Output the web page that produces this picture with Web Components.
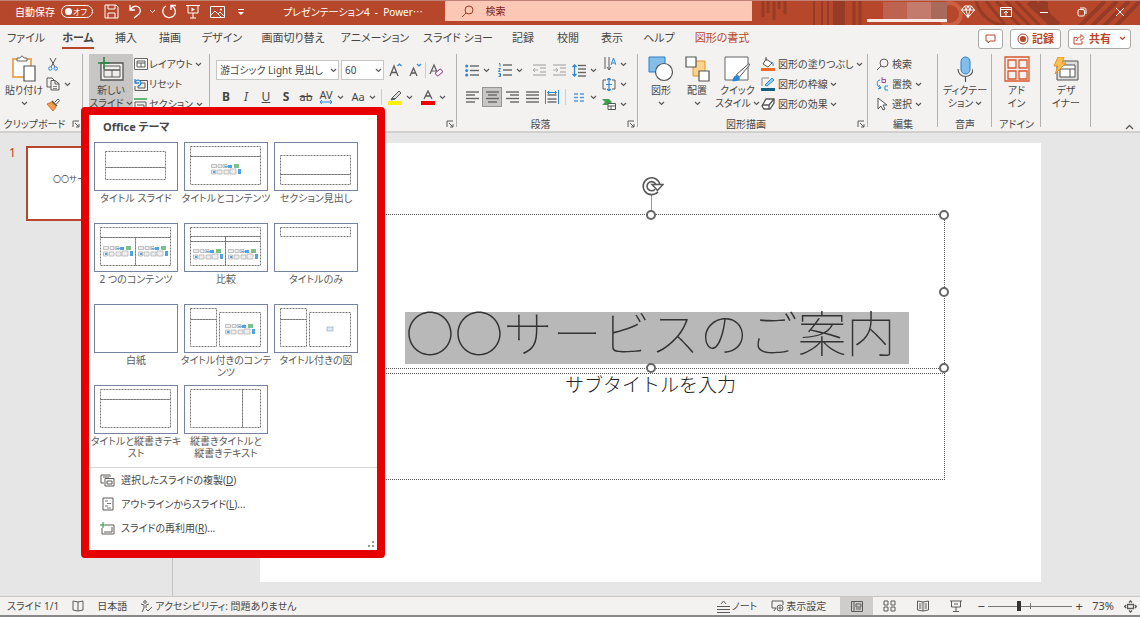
<!DOCTYPE html>
<html lang="ja">
<head>
<meta charset="utf-8">
<meta name="viewport" content="width=device-width, initial-scale=1">
<title>プレゼンテーション4 - PowerPoint</title>
<style>
  body {
    margin: 0;
    color: #484644;
    font: 11px/14px "Noto Sans", "Noto Sans CJK JP", sans-serif;
    font-feature-settings: "palt" 1;
  }
</style>
</head>
<body>
<app-window></app-window>
<script>
/* ---------- icon set: [width, height, markup] ---------- */
const G = 'fill="none" stroke="#5d5b59"';
const B = 'fill="none" stroke="#2b88d8"';
const rows = (list, color = '#666') => list.map(([x, y, w]) => `<path d="M${x} ${y}h${w}" stroke="${color}" stroke-width="1.4"/>`).join('');
const ICONS = {
  caret: [7, 5, `<path d="M1 1l2.5 2.5L6 1" ${G} stroke-width="1.2"/>`],
  caretWhite: [7, 5, '<path d="M1 1l2.5 2.5L6 1" fill="none" stroke="#fff"/>'],
  caretRed: [7, 5, '<path d="M1 1l2.5 2.5L6 1" fill="none" stroke="#b7472a" stroke-width="1.2"/>'],
  save: [15, 15, '<path d="M1 1h11l2 2v11H1zM4 1v4h7V1M4 14V9h7v5" fill="none" stroke="#fff"/>'],
  undo: [14, 15, '<path d="M2 1v5h5M2 6C4 3 7 1.500 9.500 2.500C13 4 13 8 11 10L6 14" fill="none" stroke="#fff" stroke-width="1.300"/>'],
  redo: [16, 15, '<path d="M5 2C2 3.500 1 7 2.500 10C4 13.500 9 15 12.500 12C15.500 9 15 4.500 11 2M10 6V1.500h5" fill="none" stroke="#fff" stroke-width="1.300"/>'],
  present: [14, 15, '<path d="M0 1.500h14M2 2v7h10V2M7 9v5M4 14h6" fill="none" stroke="#fff"/><path d="M5.500 3.500v4L9 5.500z" fill="#fff"/>'],
  picture: [15, 12, '<path d="M.5.5h14v11H.5zM1 9l4-4 6 6M8 8l2-2 4 4" fill="none" stroke="#fff"/><circle cx="11" cy="3.500" r="1" fill="#fff"/>'],
  more: [8, 8, '<path d="M1 1.500h6" stroke="#fff"/><path d="M1 4l3 3 3-3z" fill="#fff"/>'],
  searchRed: [13, 13, '<circle cx="8" cy="5" r="4" fill="none" stroke="#9c3a28"/><path d="M5 8L1 12" stroke="#9c3a28"/>'],
  diamond: [14, 13, '<path d="M3.500 1h7L13.500 5 7 12.500.5 5zM.5 5h13M3.500 1L5 5l2 7.500L9 5l1.500-4M5 5l2-4 2 4" fill="none" stroke="#fff"/>'],
  display: [12, 10, '<path d="M.5.500h11v9H.5zM.5 2.500h11M6 8.500V4M4 6l2-2 2 2" fill="none" stroke="#fff"/>'],
  minimize: [10, 10, '<path d="M1 5.500h8" stroke="#fff"/>'],
  restore: [10, 10, '<rect x="1" y="2.500" width="6.500" height="6.500" rx="1.500" fill="none" stroke="#fff"/><path d="M3 1h4.500Q9 1 9 2.500V7" fill="none" stroke="#fff"/>'],
  close: [10, 10, '<path d="M1 1l8 8M9 1L1 9" stroke="#fff"/>'],
  comment: [11, 10, '<path d="M1 1h9v6H5L3 9V7H1z" fill="none" stroke="#b7472a"/>'],
  record: [12, 12, '<circle cx="6" cy="6" r="5" fill="none" stroke="#b7472a"/><circle cx="6" cy="6" r="3" fill="#b7472a"/>'],
  share: [12, 12, '<path d="M4 4.500H1v6.500h8V8M3.500 8C4 5 6 4 8 4V1.500L11 4.500 8 7.500V5.500" fill="none" stroke="#b7472a"/>'],
  paste: [24, 28, `<path d="M1 4h18v18H1z" fill="#fff" stroke="#e8912d" stroke-width="1.500"/><path d="M5 6V3h3Q10-1 12 3h3v3z" fill="#fff" stroke="#666"/><path d="M12 11h11v15H12z" fill="#fff" stroke="#555" stroke-width="1.200"/>`],
  cut: [10, 13, '<path d="M2 0l5 9M8 0L3 9" stroke="#555" fill="none"/><circle cx="2.300" cy="10.500" r="1.700" fill="none" stroke="#2b88d8"/><circle cx="7.700" cy="10.500" r="1.700" fill="none" stroke="#2b88d8"/>'],
  copy: [14, 14, `<path d="M5 10H1V1h5l2 2M5 3.500h4l4 3V13H5zM9 4v3h4" ${G}/><path d="M7 9.500h4M7 11.500h4" stroke="#888"/>`],
  brush: [14, 13, '<path d="M9 4l3-3 1.500 1.500-3 3.500" fill="#fff" stroke="#555"/><path d="M1 6l5-2 4 5-3 4z" fill="#f4a044" stroke="#d9722b"/><path d="M6 3l5 5" stroke="#555" stroke-width="1.500"/>'],
  newSlide: [26, 25, `<path d="M3 6h22v17H3z" fill="#eee" stroke="#555" stroke-width="1.300"/><path d="M6 9h16v4H6zM6 13h16v7H6zM14 13v7" ${G}/><path d="M0 6h12M6 0v12" stroke="#2a8a3a" stroke-width="1.600"/>`],
  layout: [14, 12, `<path d="M.5.500h13v11H.5z" fill="#fff" stroke="#666"/><path d="M3 3h8v6H3zM3 5h8M7 5v4" ${G}/>`],
  reset: [14, 13, `<path d="M5 2.500h8.500v10H1V8M7 5h4v5H4V8" ${G}/><path d="M1 1v4h4M1 5C2 2 5 1 6.500 3.500C7.500 6 6 8 4 8" ${B} stroke-width="1.300"/>`],
  section: [14, 14, `<path d="M0 1h13v2H0z" fill="#6bb57a"/><path d="M1 5h11v8H1zM3 8h7v5" ${G}/>`],
  grow: [13, 14, `<path d="M1 13L5 3l4 10M2.500 9.500h5" ${G} stroke-width="1.300"/><path d="M8.500 3L10.500 1l2 2" ${B} stroke-width="1.200"/>`],
  shrink: [13, 14, `<path d="M1 13L4.500 5l3.500 8M2.300 10h4.400" ${G} stroke-width="1.300"/><path d="M8 1l2 2 2-2" ${B} stroke-width="1.200"/>`],
  clear: [14, 14, `<path d="M1 11L5 2l4 9M2.500 8h5" ${G} stroke-width="1.200"/><rect x="6.500" y="7.500" width="7" height="4" rx="1" transform="rotate(-40 10 9.500)" fill="#fff" stroke="#a349a4"/>`],
  spacing: [14, 4, `<path d="M1 2h12M3 0L1 2l2 2M11 0l2 2-2 2" ${B}/>`],
  marker: [14, 15, '<path d="M4 8l7-7 2 2-6 6zM4 8l3 1-4 1z" fill="#ddd" stroke="#555"/><path d="M0 11h14v4H0z" fill="#fff100"/>'],
  fontColor: [14, 15, `<path d="M3 9l4-8 4 8M4.500 6h5" ${G} stroke-width="1.300"/><path d="M0 11h14v4H0z" fill="#f00000"/>`],
  bullets: [14, 13, rows([[5, 2, 9], [5, 6.5, 9], [5, 11, 9]]) + '<g fill="#2b88d8"><circle cx="1.700" cy="2" r="1.500"/><circle cx="1.700" cy="6.500" r="1.500"/><circle cx="1.700" cy="11" r="1.500"/></g>'],
  numbers: [14, 14, rows([[5, 2, 9], [5, 7, 9], [5, 12, 9]]) + `<path d="M1 .5h1v3M.5 5.500h2L.5 8.500h2M.5 10.500h2v3h-2M1 12h1.500" ${B}/>`],
  outdent: [13, 12, rows([[0, 1, 13], [7, 4, 6], [7, 8, 6], [0, 11, 13]], '#b5b5b5') + '<path d="M0 6h5M2 4L0 6l2 2" fill="none" stroke="#aaa"/>'],
  indent: [13, 12, rows([[0, 1, 13], [7, 4, 6], [7, 8, 6], [0, 11, 13]], '#b5b5b5') + '<path d="M0 6h5M3 4l2 2-2 2" fill="none" stroke="#aaa"/>'],
  lineSpace: [14, 13, rows([[6, 1.5, 8], [6, 5, 8], [6, 8.5, 8], [6, 12, 8]]) + `<path d="M2.500 1v11M.5 3l2-2 2 2M.5 10l2 2 2-2" ${B} stroke-width="1.300"/>`],
  alignL: [13, 12, rows([[0, 1, 13], [0, 4, 9], [0, 7.5, 13], [0, 11, 9]])],
  alignC: [13, 12, rows([[0, 1, 13], [2, 4, 9], [0, 7.5, 13], [2, 11, 9]])],
  alignR: [13, 12, rows([[0, 1, 13], [4, 4, 9], [0, 7.5, 13], [4, 11, 9]])],
  justify: [13, 12, rows([[0, 1, 13], [0, 4, 13], [0, 7.5, 13], [0, 11, 13]])],
  distribute: [14, 14, rows([[2.5, 5, 9], [2.5, 9, 9], [2.5, 12, 9]]) + `<path d="M.5 0v14M13.500 0v14M2 2.500h10M4 1L2.500 2.500 4 4M10 1l1.500 1.500L10 4" ${B}/>`],
  columns: [11, 9, rows([[0, 1, 4], [6, 1, 4], [0, 4.5, 4], [6, 4.5, 4], [0, 8, 4], [6, 8, 4]], '#4a97d6')],
  direction: [13, 14, `<path d="M2 0v12M6 0v12M4 10l2 3 2-3" ${G}/><path d="M8 8l2.500-7L13 8M9 6h3" ${B}/>`],
  alignText: [14, 13, `<path d="M4 2H1v9h3M10 2h3v9h-3" ${G}/><path d="M7 0v13M5 2l2-2 2 2M5 11l2 2 2-2M4 6.500h6" ${B} stroke-width="1.200"/>`],
  smartArt: [14, 12, '<path d="M0 1h7l3 3-3 3H0l3-3z" fill="#3fa04d"/><path d="M6 5.500h7.500v6H6z" fill="#fff" stroke="#555"/><path d="M6 8h7M9 8v3" stroke="#555"/>'],
  shapes: [26, 26, '<path d="M1 1h16v15H1z" fill="#83bdec" stroke="#2b7fc7"/><circle cx="16" cy="16" r="8.500" fill="#fff" stroke="#555" stroke-width="1.200"/>'],
  arrange: [25, 26, '<path d="M8 5h12v15H8z" fill="#fbd38a" stroke="#e8912d"/><path d="M1 1h10v10H1zM14 15h10v10H14z" fill="#fff" stroke="#555" stroke-width="1.200"/>'],
  quick: [26, 27, '<path d="M1 1h23v23H1z" fill="#fff" stroke="#666"/><path d="M25 7.500L25.500 9 15.500 21l-3-2.500z" fill="#fff" stroke="#555"/><path d="M8 25q2-6 5-6l3 3q-1 4-8 3z" fill="#2b88d8"/>'],
  fill: [14, 14, '<path d="M5 2l6 4-4 4-5-3zM5 4V0" fill="#fff" stroke="#555"/><path d="M11 5q2 2 1 4" fill="none" stroke="#2b88d8"/><path d="M0 11h14v3H0z" fill="#ed6b2d"/>'],
  outline: [14, 14, '<path d="M1 9V1h7" fill="none" stroke="#888"/><path d="M4 8l7-7 2 2-7 6z" fill="#9dd0f5" stroke="#2b88d8"/><path d="M0 11h14v3H0z" fill="#156082"/>'],
  effects: [14, 12, '<path d="M5 1h8v4l-4 6H3L1 8z" fill="#fff" stroke="#555" stroke-width="1.300"/><path d="M1 7h7l5-6M8 7v4" fill="none" stroke="#555" stroke-width="1.300"/>'],
  find: [13, 13, `<circle cx="8" cy="5" r="4" ${G}/><path d="M5 8L1 12" ${G}/>`],
  replace: [13, 14, '<path d="M6 0v5.500h3.500V2.500H6" fill="none" stroke="#a349a4"/><path d="M4 3C1 3 0 8 3 10l2 1M3 8l2 3-3 1M12 9H9v4h3" fill="none" stroke="#2b88d8"/>'],
  select: [10, 14, `<path d="M1 1v11l3-3 2 4 2-1-2-4h4z" fill="#fff" stroke="#555"/>`],
  mic: [16, 26, '<rect x="4" y="1" width="9" height="17" rx="4.500" fill="#83bdec" stroke="#2b7fc7"/><path d="M1 13c0 10 15 10 15 0M8.500 21v5" fill="none" stroke="#555" stroke-width="1.200"/>'],
  addins: [26, 26, '<path d="M1 1h24v24H1zM4 4h8v8H4zM15 4h8v8h-8zM4 15h8v8H4zM15 15h8v8h-8z" fill="none" stroke="#d9572b" stroke-width="1.300"/>'],
  designer: [26, 25, '<path d="M4 4h21v19H4z" fill="#ddd" stroke="#555"/><path d="M7 8h15v12H7zM7 12h15M17 12v8" fill="#fff" stroke="#555"/><path d="M5 0h6L9 6h4L2 17l3-8H1z" fill="#fbc04d" stroke="#e8912d"/>'],
  launcher: [8, 8, `<path d="M1 7V1h6M3 3l4 4M7 4v3H4" ${G}/>`],
  collapse: [9, 6, `<path d="M1 5l3.500-3.500L8 5" ${G} stroke-width="1.300"/>`],
  duplicate: [15, 13, `<path d="M4 9H1V1h9v2M3 3H9" ${G}/><path d="M5 4.500h9v7.500H5zM7 7h5v3H7z" fill="#fff" stroke="#5d5b59"/>`],
  outlineDoc: [12, 14, `<path d="M1 1h10v12H1z" ${G}/><path d="M3 4h3M5 6.500h4M3 9h3M5 11h4" stroke="#777"/>`],
  reuse: [15, 13, `<path d="M6 3h8v9H2V6M4 10h8V5" ${G}/><path d="M0 3h6M3 0v6" stroke="#2a8a3a"/>`],
  rotate: [22, 20, '<path d="M14.500 14.500A6.500 6.500 0 1 1 16 9" fill="none" stroke="#5a5a5a" stroke-width="5.500"/><path d="M14.500 14.500A6.500 6.500 0 1 1 16 9" fill="none" stroke="#fff" stroke-width="2.200"/><path d="M10 8.500h11l-5.500 6z" fill="#fff" stroke="#5a5a5a" stroke-width="1.500"/>'],
  book: [12, 12, `<path d="M6 2L1 1v9l5 1 5-1V1zM6 2v9" ${G}/>`],
  access: [12, 12, `<circle cx="5" cy="2" r="1.300" ${G}/><path d="M1 4l3 1v3l-2 4M9 4L6 5v3M6 9l2 2 4-4" ${G}/>`],
  notes: [13, 13, `<path d="M0 6.500h13M0 9.500h13M0 12.500h13M4 4l2.500-3L9 4" ${G}/>`],
  viewOpt: [13, 12, `<path d="M5 8H1V1h11v4M3 11l2-3" ${G}/><circle cx="9" cy="8" r="3" ${G}/><circle cx="9" cy="8" r="1" ${G}/>`],
  normal: [12, 11, `<path d="M.5.500h11v10H.5zM3 1v9M5 3h5v3H5zM5 8h5" ${G}/>`],
  sorter: [13, 12, `<path d="M1 1h4v4H1zM8 1h4v4H8zM1 7h4v4H1zM8 7h4v4H8z" ${G}/>`],
  reading: [12, 12, `<path d="M6 2L.5 1v9L6 11l5.500-1V1zM6 2v9M2 4h2.500M2 6h2.500M2 8h2.500M7.500 4H10M7.500 6H10M7.500 8H10" ${G}/>`],
  show: [12, 12, `<path d="M0 1h12M1.500 1v6h9V1M6 7v4M3 11.500h6M4 4h4" ${G}/>`],
  fit: [13, 13, `<path d="M3.500 4.500h6v4h-6zM5 2.500L6.500 1 8 2.500M5 10.500L6.500 12 8 10.500M2 5L.7 6.500 2 8M11 5l1.300 1.500L11 8" ${G} stroke-width="1.300"/>`]
};
const icon = name => {
  const [w, h, art] = ICONS[name];
  return `<svg width="${w}" height="${h}" viewBox="0 0 ${w} ${h}" aria-hidden="true">${art}</svg>`;
};

const BASE = `
  :host { box-sizing: border-box; display: block; }
  *, *::before, *::after { box-sizing: border-box; }
  button, select, input { margin: 0; padding: 0; border: 0; background: none; color: inherit; font: inherit; font-feature-settings: inherit; white-space: nowrap; }
  svg { display: block; flex: none; }
`;
const define = (name, render) => customElements.define(name, class extends HTMLElement {
  constructor() {
    super();
    this.attachShadow({ mode: 'open' });
  }
  connectedCallback() {
    this.shadowRoot.innerHTML = render(this);
  }
});

/* ---------- title bar ---------- */
define('title-bar', () => `
<style>${BASE}
  :host { position: relative; display: grid; grid-template-columns: 39fr 27fr 34fr; height: 25px; overflow: hidden; background: #b7472a; border-top: 1px solid #c08377; color: #fff; }
  .art { position: absolute; right: 0; top: 0; }
  .left, .right { display: flex; align-items: center; height: 21px; min-width: 0; position: relative; }
  .left { padding-left: 15px; }
  .right { justify-content: flex-end; padding-right: 1px; }
  label { display: flex; align-items: center; gap: 6px; margin-right: 6px; font-size: 10px; }
  .switch { position: relative; width: 32px; height: 13px; font-size: 8px; line-height: 11px; border: 1px solid #fff; border-radius: 7px; text-align: right; padding-right: 5px; }
  .switch input { position: absolute; inset: 0; appearance: none; }
  .switch input::before { content: ""; position: absolute; left: 3px; top: 2px; width: 7px; height: 7px; border-radius: 50%; background: #fff; }
  .left button { display: grid; place-items: center; width: 24px; height: 20px; flex: none; }
  .left button.drop { width: 10px; }
  h1 { margin: 0 0 0 30px; font-size: 10px; font-weight: 400; white-space: pre; }
  h1 span { font-family: "Noto Sans CJK JP", sans-serif; font-feature-settings: normal; }
  .search { display: flex; align-items: center; height: 20px; padding-left: 16px; gap: 12px; background: #fcc7b4; color: #7c2214; position: relative; }
  .search input { flex: 1; min-width: 0; font-size: 10px; outline: 0; }
  .search input::placeholder { color: #7c2214; opacity: 1; }
  .right button { display: grid; place-items: center; width: 38px; height: 20px; }
  .account { display: grid; grid-template-columns: 16px 24px 24px 16px; width: 80px; height: 20px; margin-right: 2px; border-bottom: 3px solid #fbe9e5; align-self: end; }
  .account i:nth-child(1) { background: #b7472a; }
  .account i:nth-child(2) { background: #bd6350; }
  .account i:nth-child(3) { background: #c27b6c; }
  .account i:nth-child(4) { background: #a96a5c; }
</style>
<svg class="art" width="380" height="25" viewBox="0 0 380 25" fill="none" stroke="#963b25">
  <path d="M3 0v16M8 0v12M14 0v19M19 0v8M25 0v13" stroke-width="3"/>
  <path d="M54 0v25M62 0v25M68 0v25" stroke-width="2"/><path d="M79 0v25" stroke-width="12"/>
  <path d="M94 0v25M100 0v25" stroke-width="3"/>
  <circle cx="190" cy="13" r="11" stroke="#cb6043" stroke-width="4"/>
  <path d="M216 0q8 25 36 25M226 0l20 25M236 0l24 25M246 0l24 25M256 0l24 25" stroke-width="3"/>
  <path d="M270 0l26 25M284 0q-4 14 14 25" stroke-width="9"/>
  <path d="M320 25l25-25M332 25l25-25M344 25l25-25M356 25l24-25" stroke-width="4"/>
</svg>
<div class="left">
  <label>自動保存<span class="switch"><input type="checkbox" role="switch" aria-label="自動保存">オフ</span></label>
  <button aria-label="保存">${icon('save')}</button>
  <button aria-label="元に戻す">${icon('undo')}</button>
  <button class="drop" aria-label="元に戻す履歴">${icon('caretWhite')}</button>
  <button aria-label="やり直し">${icon('redo')}</button>
  <button aria-label="先頭から開始">${icon('present')}</button>
  <button aria-label="画像">${icon('picture')}</button>
  <button aria-label="カスタマイズ">${icon('more')}</button>
  <h1>プレゼンテーション4  -  Power<span>…</span></h1>
</div>
<div class="search">${icon('searchRed')}<input type="search" placeholder="検索" aria-label="検索"></div>
<div class="right">
  <span class="account"><i></i><i></i><i></i><i></i></span>
  <button aria-label="プレミアム">${icon('diamond')}</button>
  <button aria-label="リボンの表示">${icon('display')}</button>
  <button aria-label="最小化">${icon('minimize')}</button>
  <button aria-label="元のサイズ">${icon('restore')}</button>
  <button aria-label="閉じる">${icon('close')}</button>
</div>`);

/* ---------- tabs ---------- */
define('tab-strip', () => `
<style>${BASE}
  :host { display: flex; justify-content: space-between; height: 27px; background: #f3f2f1; }
  nav { display: grid; grid-template-columns: 52px 52px 44px 44px 60px 82px 82px 84px 46px 44px 44px 50px 76px; }
  a { display: flex; justify-content: center; align-items: center; color: inherit; text-decoration: none; white-space: nowrap; }
  a span { padding: 3px 0 2px; border-bottom: 2px solid transparent; }
  a.on { font-weight: 700; }
  a.on span { border-color: #b7472a; }
  a.context { color: #b7472a; }
  .actions { display: flex; align-items: center; gap: 7px; padding-right: 9px; color: #b7472a; font-weight: 700; }
  button { display: flex; align-items: center; justify-content: center; gap: 3px; height: 20px; padding: 0 6px; background: #fff; border: 1px solid #aaa8a6; border-radius: 3px; }
  .share { gap: 4px; padding: 0 4px; }
  .share svg:last-child { margin-left: 4px; }
</style>
<nav>
  <a href="#"><span>ファイル</span></a><a href="#" class="on"><span>ホーム</span></a><a href="#"><span>挿入</span></a><a href="#"><span>描画</span></a>
  <a href="#"><span>デザイン</span></a><a href="#"><span>画面切り替え</span></a><a href="#"><span>アニメーション</span></a><a href="#"><span>スライド ショー</span></a>
  <a href="#"><span>記録</span></a><a href="#"><span>校閲</span></a><a href="#"><span>表示</span></a><a href="#"><span>ヘルプ</span></a><a href="#" class="context"><span>図形の書式</span></a>
</nav>
<div class="actions">
  <button aria-label="コメント">${icon('comment')}</button>
  <button>${icon('record')}記録</button>
  <button class="share">${icon('share')}共有${icon('caretRed')}</button>
</div>`);

/* ---------- ribbon parts ---------- */
define('ribbon-group', el => `
<style>${BASE}
  :host { display: grid; grid-template-rows: 1fr 14px; padding-top: 2px; min-width: 0; position: relative; }
  :host::after { content: ""; position: absolute; right: 0; top: 2px; bottom: 4px; width: 1px; background: #b3b1af; }
  .body { display: flex; min-width: 0; min-height: 0; }
  footer { display: flex; justify-content: center; font-size: 10px; white-space: nowrap; padding: 0 14px 0 0; }
  :host([plain]) .body { justify-content: center; }
  :host([plain]) footer { padding: 0; }
  button { position: absolute; right: 3px; bottom: 3px; }
</style>
<div class="body"><slot></slot></div>
<footer>${el.getAttribute('label') || ''}</footer>
${el.hasAttribute('plain') ? '' : `<button aria-label="詳細設定">${icon('launcher')}</button>`}`);

define('tool-button', el => `
<style>${BASE}
  :host { flex: none; }
  button { display: flex; align-items: center; height: 20px; }
  .art { display: grid; place-items: center; width: 20px; height: 20px; flex: none; }
  .drop { display: grid; place-items: center; width: 12px; margin-left: -2px; }
  :host([wide]) .drop { margin-left: 0; }
  :host([tight]) .art { width: 16px; }
  :host([pressed]) button { background: #c8c6c4; outline: 1px solid #979593; outline-offset: -1px; }
</style>
<button aria-label="${el.getAttribute('name')}">
  <span class="art">${el.getAttribute('icon') ? icon(el.getAttribute('icon')) : '<slot name="face"></slot>'}</span><slot></slot>
  ${el.hasAttribute('drop') ? `<span class="drop">${icon('caret')}</span>` : ''}
</button>`);

define('tall-button', el => `
<style>${BASE}
  :host { flex: none; }
  button { display: grid; grid-template-rows: 30px 13px 13px; justify-items: center; align-items: center; width: 100%; line-height: 13px; font-size: 10px; }
  .second { display: flex; align-items: center; gap: 2px; height: 13px; }
  :host([pressed]) { background: #c8c6c4; }
</style>
<button>${icon(el.getAttribute('icon'))}<span><slot></slot></span>
<span class="second"><slot name="second"></slot>${el.hasAttribute('drop') ? icon('caret') : ''}</span></button>`);

define('ribbon-bar', () => `
<style>${BASE}
  :host { display: grid; grid-template-columns: 83px 127px 247px 181px 230px 70px 54px 49px 50px 1fr; height: 81px; background: #f3f2f1; border-bottom: 2px solid #d2d0ce; }
  .stack, .pair, .row { display: flex; flex-direction: column; }
  .stack, .tight { font-size: 10px; }
  .pair { gap: 7px; padding-top: 6px; }
  .row { flex-direction: row; align-items: center; height: 20px; }
  .rule { width: 1px; height: 16px; background: #cfcdcb; }
  select { height: 20px; background: #fff; border: 1px solid #c8c6c4; padding-left: 3px; appearance: none; width: 100%; outline: 0; font-size: 10px; }
  .pick { position: relative; margin-right: 2px; }
  .pick svg { position: absolute; right: 2px; top: 8px; }
  .name { width: 123px; } .size { width: 43px; margin-right: 1px; }
  b, em, u, s { font-size: 12px; color: #484644; line-height: 14px; }
  .soft { font-size: 11px; }
  .av { display: grid; justify-items: center; line-height: 10px; font-size: 11px; }
  .edit { margin: 0 auto 0 4px; }
  .collapse { justify-self: end; align-self: end; padding: 0 6px 1px; }
</style>
<ribbon-group label="クリップボード">
  <tall-button icon="paste" drop style="width:48px">貼り付け</tall-button>
  <div class="stack" style="margin-left:-5px"><tool-button icon="cut" name="切り取り"></tool-button><tool-button icon="copy" name="コピー" drop></tool-button><tool-button icon="brush" name="書式のコピー"></tool-button></div>
</ribbon-group>
<ribbon-group>
  <tall-button icon="newSlide" drop pressed style="width:44px;margin-left:6px">新しい<span slot="second">スライド</span></tall-button>
  <div class="stack"><tool-button tight icon="layout" name="レイアウト" drop wide>レイアウト</tool-button><tool-button tight icon="reset" name="リセット">リセット</tool-button><tool-button tight icon="section" name="セクション" drop wide>セクション</tool-button></div>
</ribbon-group>
<ribbon-group>
  <div class="pair" style="margin-left:6px">
    <div class="row">
      <div class="pick name"><select aria-label="フォント"><option>游ゴシック Light 見出し</option></select>${icon('caret')}</div>
      <div class="pick size"><select aria-label="フォント サイズ"><option>60</option></select>${icon('caret')}</div>
      <tool-button icon="grow" name="拡大"></tool-button><tool-button icon="shrink" name="縮小"></tool-button><i class="rule"></i><tool-button icon="clear" name="書式のクリア"></tool-button>
    </div>
    <div class="row">
      <tool-button name="太字"><b slot="face">B</b></tool-button><tool-button name="斜体"><em slot="face">I</em></tool-button><tool-button name="下線"><u slot="face">U</u></tool-button><tool-button name="影"><b slot="face">S</b></tool-button><tool-button name="取り消し線"><s slot="face" class="soft">ab</s></tool-button><tool-button name="文字の間隔" drop><span slot="face" class="av">AV${icon('spacing')}</span></tool-button><tool-button name="文字種の変換" drop style="margin-left:2px"><span slot="face">Aa</span></tool-button><i class="rule" style="margin:0 3px"></i><tool-button icon="marker" name="蛍光ペン" drop></tool-button><tool-button icon="fontColor" name="フォントの色" drop style="margin-left:3px"></tool-button>
    </div>
  </div>
</ribbon-group>
<ribbon-group label="段落">
  <div class="pair" style="margin-left:5px">
    <div class="row"><tool-button icon="bullets" name="箇条書き" drop></tool-button><tool-button icon="numbers" name="段落番号" drop style="margin:0 4px 0 3px"></tool-button><tool-button icon="outdent" name="インデントを減らす"></tool-button><tool-button icon="indent" name="インデントを増やす"></tool-button><tool-button icon="lineSpace" name="行間" drop></tool-button></div>
    <div class="row"><tool-button icon="alignL" name="左揃え"></tool-button><tool-button icon="alignC" name="中央揃え" pressed></tool-button><tool-button icon="alignR" name="右揃え"></tool-button><tool-button icon="justify" name="両端揃え"></tool-button><tool-button icon="distribute" name="均等割り付け"></tool-button><i class="rule" style="margin:0 3px"></i><tool-button icon="columns" name="段の追加" drop></tool-button></div>
  </div>
  <div class="stack"><tool-button icon="direction" name="文字列の方向" drop></tool-button><tool-button icon="alignText" name="文字の配置" drop></tool-button><tool-button icon="smartArt" name="SmartArt" drop></tool-button></div>
</ribbon-group>
<ribbon-group label="図形描画">
  <tall-button icon="shapes" drop style="width:36px;margin-left:5px">図形</tall-button>
  <tall-button icon="arrange" drop style="width:36px">配置</tall-button>
  <tall-button icon="quick" drop style="width:43px">クイック<span slot="second">スタイル</span></tall-button>
  <div class="stack"><tool-button icon="fill" name="図形の塗りつぶし" drop wide>図形の塗りつぶし</tool-button><tool-button icon="outline" name="図形の枠線" drop wide>図形の枠線</tool-button><tool-button icon="effects" name="図形の効果" drop wide>図形の効果</tool-button></div>
</ribbon-group>
<ribbon-group label="編集" plain>
  <div class="stack edit"><tool-button icon="find" name="検索">検索</tool-button><tool-button icon="replace" name="置換" drop wide>置換</tool-button><tool-button icon="select" name="選択" drop wide>選択</tool-button></div>
</ribbon-group>
<ribbon-group label="音声" plain><tall-button icon="mic" drop>ディクテー<span slot="second">ション</span></tall-button></ribbon-group>
<ribbon-group label="アドイン" plain><tall-button icon="addins">アド<span slot="second">イン</span></tall-button></ribbon-group>
<ribbon-group plain><tall-button icon="designer">デザ<span slot="second">イナー</span></tall-button></ribbon-group>
<button class="collapse" aria-label="リボンを折りたたむ">${icon('collapse')}</button>`);

/* ---------- layout gallery ---------- */
const box = (x, y, w, h) => `<rect x="${x}" y="${y}" width="${w}" height="${h}" fill="none" stroke="#777" stroke-dasharray="2 1"/>`;
const media = (x, y) => `<g transform="translate(${x} ${y})"><path d="M.5.500h5v3h-5zM7 .5h4v3H7zM12 .5h4v3h-4zM.5 6h4v4h-4zM6 6h5v4H6zM13 6h5v4h-5zM19 5h6v5h-6z" fill="#eee" stroke="#aaa" stroke-width=".7"/><path d="M17 1h4v3h-4zM27 5h3v5h-3zM2 7h2v2H2z" fill="#4fa3e3"/><path d="M23 0h5v4h-5z" fill="#7cc08a"/><path d="M13 2l3 1 4-2" stroke="#4fa3e3" fill="none"/></g>`;
const LAYOUTS = {
  title: box(11.5, 9.5, 60, 16) + box(11.5, 25.5, 60, 12),
  content: box(6.5, 4.5, 70, 10) + box(6.5, 14.5, 70, 28) + media(27, 22),
  section: box(6.5, 13.5, 70, 19) + box(6.5, 32.5, 70, 10),
  two: box(6.5, 4.5, 70, 10) + box(6.5, 14.5, 35, 28) + box(41.5, 14.5, 35, 28) + media(9, 23) + media(44, 23),
  compare: box(6.5, 4.5, 70, 9) + box(6.5, 13.5, 35, 5) + box(41.5, 13.5, 35, 5) + box(6.5, 18.5, 35, 24) + box(41.5, 18.5, 35, 24) + media(9, 26) + media(44, 26),
  only: box(6.5, 4.5, 70, 9),
  blank: '',
  caption: box(6.5, 4.5, 26, 11) + box(6.5, 15.5, 26, 27) + box(35.5, 8.5, 41, 34) + media(41, 20),
  photo: box(6.5, 4.5, 26, 11) + box(6.5, 15.5, 26, 27) + box(35.5, 8.5, 41, 34) + '<rect x="53" y="23" width="6" height="4" fill="#dceaf6" stroke="#9ab" stroke-width=".7"/>',
  vertical: box(6.5, 4.5, 70, 10) + box(6.5, 14.5, 70, 28),
  verticalTitle: box(6.5, 4.5, 52, 38) + box(58.5, 4.5, 18, 38)
};
define('layout-card', el => `
<style>${BASE}
  button { display: grid; justify-content: center; width: 100%; font-size: 10px; line-height: 12px; text-align: center; color: #5d5b59; white-space: nowrap; }
  svg { width: 84px; height: 49px; border: 1px solid #7683a0; background: #fff; margin-bottom: 1px; justify-self: center; }
</style>
<button><svg viewBox="1 1 82 47">${LAYOUTS[el.getAttribute('kind')]}</svg><span><slot></slot></span></button>`);

define('menu-row', el => `
<style>${BASE}
  button { display: flex; align-items: center; gap: 6px; width: 100%; height: 24px; padding-left: 11px; font-size: 10px; }
  .art { display: grid; place-items: center; width: 15px; }
</style>
<button role="menuitem"><span class="art">${icon(el.getAttribute('icon'))}</span><span><slot></slot></span></button>`);

define('layout-gallery', () => `
<style>${BASE}
  :host { width: 304px; padding-bottom: 10px; background: #fff; border: 8px solid #e60000; border-radius: 4px; }
  h2 { margin: 0; padding: 5px 14px 8px; font-size: 11px; line-height: 14px; }
  .grid { display: grid; grid-template-columns: repeat(3, 84px); grid-auto-rows: 81px; column-gap: 6px; padding-left: 5px; }
  .menu { border-top: 1px solid #d8d6d4; margin-top: 1px; }
  .grip { position: absolute; right: 2px; bottom: 2px; }
</style>
<h2>Office テーマ</h2>
<div class="grid">
  <layout-card kind="title">タイトル スライド</layout-card><layout-card kind="content">タイトルとコンテンツ</layout-card><layout-card kind="section">セクション見出し</layout-card>
  <layout-card kind="two">2 つのコンテンツ</layout-card><layout-card kind="compare">比較</layout-card><layout-card kind="only">タイトルのみ</layout-card>
  <layout-card kind="blank">白紙</layout-card><layout-card kind="caption">タイトル付きのコンテ<br>ンツ</layout-card><layout-card kind="photo">タイトル付きの図</layout-card>
  <layout-card kind="vertical">タイトルと縦書きテキ<br>スト</layout-card><layout-card kind="verticalTitle">縦書きタイトルと<br>縦書きテキスト</layout-card>
</div>
<div class="menu" role="menu">
  <menu-row icon="duplicate">選択したスライドの複製(<u>D</u>)</menu-row>
  <menu-row icon="outlineDoc">アウトラインからスライド(<u>L</u>)...</menu-row>
  <menu-row icon="reuse">スライドの再利用(<u>R</u>)...</menu-row>
</div>
<svg class="grip" width="8" height="8" viewBox="0 0 8 8" fill="#999"><path d="M5 1h2v2H5zM1 5h2v2H1zM5 5h2v2H5z"/></svg>`);

/* ---------- workspace ---------- */
define('thumbnail-rail', () => `
<style>${BASE}
  :host { display: flex; align-items: flex-start; gap: 10px; padding: 13px 12px 0 9px; border-right: 1px solid #c4c4c4; }
  span { color: #c43e1c; font-size: 12px; }
  div { flex: 1; aspect-ratio: 16 / 9; display: flex; flex-direction: column; align-items: center; justify-content: center; padding-bottom: 10px; background: #fff; border: 2px solid #b7472a; font: 400 8px/10px "Noto Sans CJK JP", sans-serif; font-feature-settings: normal; white-space: nowrap; }
</style>
<span>1</span><div>〇〇サービスのご案内</div>`);

define('slide-stage', () => `
<style>${BASE}
  :host { padding: 10px 99px 13px 87px; }
  .slide { aspect-ratio: 16 / 9; padding: 71px 96px 0; background: #fff; display: flex; flex-direction: column; gap: 4px; }
  .holder { position: relative; border: 1px dotted #555; text-align: center; font-family: "Noto Sans CJK JP", sans-serif; font-feature-settings: normal; white-space: nowrap; }
  .title { display: flex; align-items: flex-end; justify-content: center; height: 155px; padding: 0 0 4px 13px; font-size: 49px; font-weight: 100; line-height: 52px; color: #333; }
  .title mark { background: #b8b8b8; color: inherit; height: 52px; padding-right: 13px; display: flex; align-items: center; }
  .title mark span { line-height: 38px; height: 52px; }
  .sub { height: 107px; font-size: 19px; line-height: 20px; font-weight: 300; color: #222; }
  i { position: absolute; width: 10px; height: 10px; border: 2px solid #666; border-radius: 50%; background: #fff; transform: translate(-50%, -50%); }
  .stem { position: absolute; left: 50%; top: -20px; width: 1px; height: 20px; background: #999; }
  .turn { position: absolute; left: calc(50% - 9px); top: -39px; }
</style>
<div class="slide">
  <div class="holder title"><mark><span>〇〇サービスのご案内</span></mark>
    <b class="stem"></b><span class="turn">${icon('rotate')}</span>
    <i style="left:0;top:0"></i><i style="left:50%;top:0"></i><i style="left:100%;top:0"></i>
    <i style="left:0;top:50%"></i><i style="left:100%;top:50%"></i>
    <i style="left:0;top:100%"></i><i style="left:50%;top:100%"></i><i style="left:100%;top:100%"></i>
  </div>
  <div class="holder sub">サブタイトルを入力</div>
</div>`);

/* ---------- status bar ---------- */
define('status-bar', () => `
<style>${BASE}
  :host { display: flex; justify-content: space-between; align-items: center; height: 21px; padding: 0 3px 0 7px; background: #f3f2f1; border-top: 1px solid #c8c6c4; border-bottom: 2px solid #8a8886; font-size: 10px; }
  div, button { display: flex; align-items: center; }
  .left { gap: 13px; }
  .left button { gap: 3px; }
  .right .text { margin-right: 14px; gap: 2px; }
  .view { justify-content: center; width: 33px; height: 18px; }
  .view.on { background: #cfcdcb; }
  .zoom { width: 10px; justify-content: center; font-size: 13px; }
  input { appearance: none; width: 84px; height: 16px; margin: 0 2px; background: linear-gradient(#777, #777) 50% 50% / 1px 6px no-repeat, linear-gradient(#777, #777) 50% 50% / 100% 1px no-repeat; }
  input::-webkit-slider-thumb { appearance: none; width: 4px; height: 10px; background: #333; }
  output { margin: 0 10px 0 8px; font-size: 11px; }
</style>
<div class="left"><span>スライド 1/1</span><button aria-label="校正">${icon('book')}</button><button>日本語</button><button>${icon('access')}アクセシビリティ: 問題ありません</button></div>
<div class="right">
  <button class="text">${icon('notes')}ノート</button><button class="text">${icon('viewOpt')}表示設定</button>
  <button class="view on" aria-label="標準">${icon('normal')}</button><button class="view" aria-label="スライド一覧">${icon('sorter')}</button><button class="view" aria-label="閲覧表示">${icon('reading')}</button><button class="view" aria-label="スライド ショー">${icon('show')}</button>
  <button class="zoom" style="margin-left:4px">−</button><input type="range" min="10" max="210" value="82" aria-label="ズーム"><button class="zoom">+</button><output>73%</output>
  <button aria-label="ウィンドウに合わせる">${icon('fit')}</button>
</div>`);

define('app-window', () => `
<style>${BASE}
  :host { position: relative; display: flex; flex-direction: column; min-height: 100vh; background: #e6e6e6; }
  main { flex: 1; display: grid; grid-template-columns: 173px 1fr; }
  layout-gallery { position: absolute; left: 81px; top: 107px; }
</style>
<title-bar></title-bar><tab-strip></tab-strip><ribbon-bar></ribbon-bar>
<main><thumbnail-rail></thumbnail-rail><slide-stage></slide-stage></main>
<status-bar></status-bar>
<layout-gallery></layout-gallery>`);
</script>
</body>
</html>
